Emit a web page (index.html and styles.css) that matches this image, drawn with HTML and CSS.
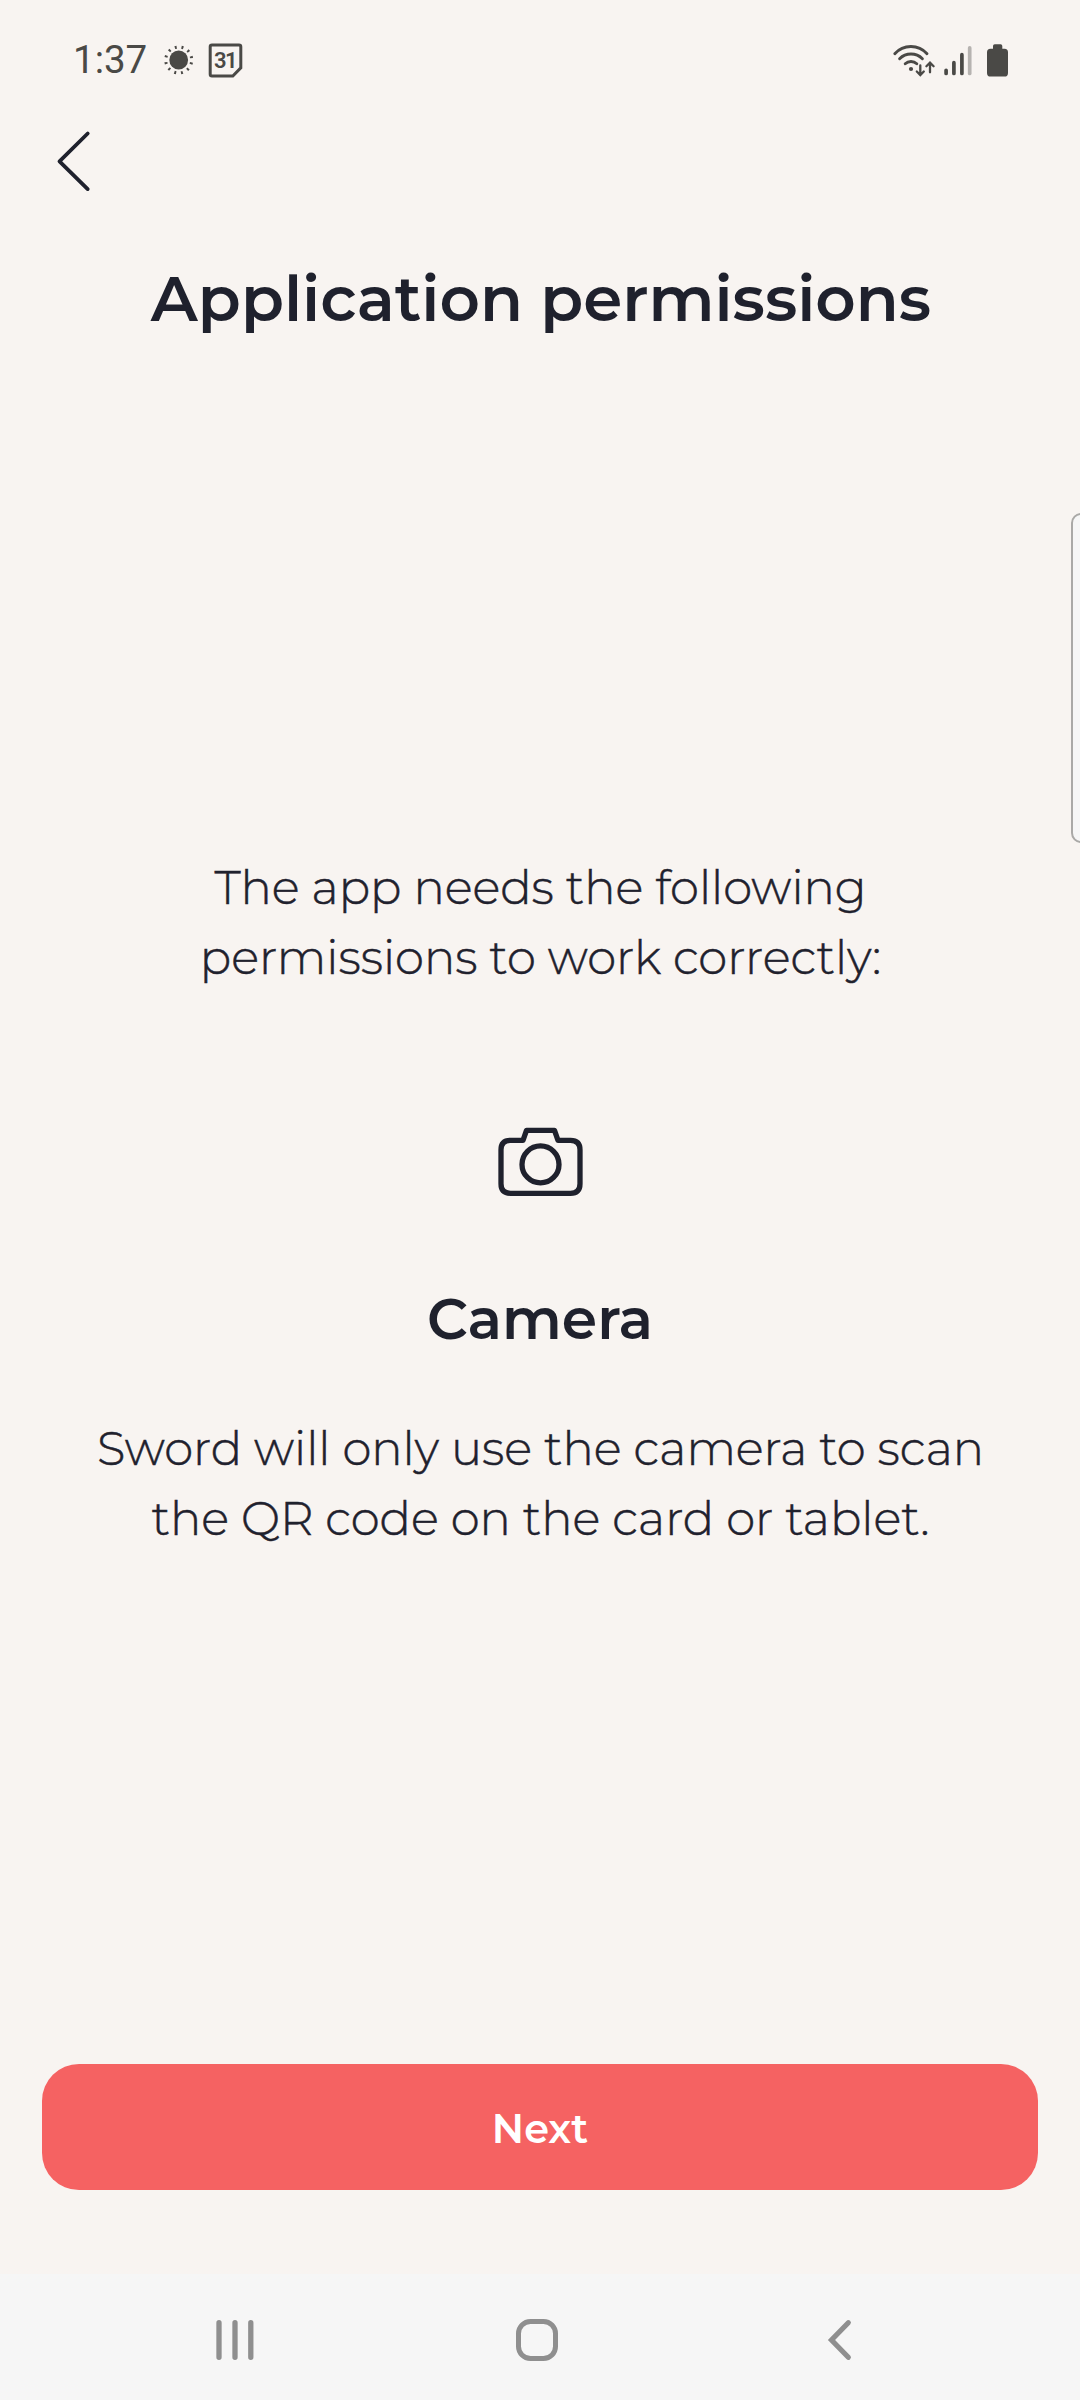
FILE: index.html
```html
<!DOCTYPE html>
<html lang="en">
<head>
<meta charset="utf-8">
<title>Application permissions</title>
<link rel="stylesheet" href="styles.css">
</head>
<body>
<div class="screen">
  <header class="status">
    <span class="time">1:37</span>
    <svg class="sun" width="32" height="40" viewBox="163 40 32 40">
      <circle cx="178.700" cy="60" r="9.400" fill="currentColor"/>
      <circle cx="178.700" cy="60" r="13" fill="none" stroke="currentColor" stroke-width="3" stroke-dasharray="1.900 4.907" stroke-dashoffset="-2.450"/>
    </svg>
    <svg class="calendar" width="38" height="40" viewBox="206 40 38 40">
      <path d="M212 45H239Q240.800 45 240.800 46.800V67.800L232.800 76.100H212Q210.200 76.100 210.200 74.300V46.800Q210.200 45 212 45Z" fill="none" stroke="currentColor" stroke-width="3"/>
      <text x="225" y="67.600" text-anchor="middle" class="day">31</text>
    </svg>
    <svg class="signals" width="120" height="40" viewBox="890 40 120 40" fill="none" stroke="currentColor" stroke-linecap="round">
      <g stroke-width="2.900">
        <path d="M894.800 53.700A21.500 21.500 0 0 1 927 53.700"/>
        <path d="M899.600 58.700A16.200 16.200 0 0 1 922.400 58.700"/>
        <path d="M905.200 63.800A8.500 8.500 0 0 1 916.800 63.800"/>
      </g>
      <circle cx="911" cy="69" r="2.100" fill="currentColor" stroke="none"/>
      <path d="M920.300 65.500V75M916.800 71.500L920.300 75L923.800 71.500M930 72.300V62.700M926.400 66.200L930 62.700L933.600 66.200" stroke-width="2.300"/>
      <g stroke-width="3.700">
        <path d="M946.100 70.300V73.400M953.900 62.700V73.400M961.900 54.700V73.400"/>
        <path class="faint" d="M969.700 47.900V73.400"/>
      </g>
      <path d="M994.800 44.200H1000.600Q1002.300 44.200 1002.300 46V48.700H1004.500Q1008 48.700 1008 52.200V72.900Q1008 76.500 1004.500 76.500H990.500Q987 76.500 987 72.900V52.200Q987 48.700 990.500 48.700H993V46Q993 44.200 994.800 44.200Z" fill="currentColor" stroke="none"/>
    </svg>
  </header>

  <nav class="toolbar">
    <svg class="back" width="36" height="62" viewBox="55 130 36 62">
      <path d="M87.700 133.500L59.500 161.300L87.700 189.100" fill="none" stroke="currentColor" stroke-width="3.800" stroke-linecap="round" stroke-linejoin="round"/>
    </svg>
  </nav>

  <h1 class="title">Application permissions</h1>

  <main class="content">
    <p class="copy">The app needs the following<br>permissions to work correctly:</p>
    <svg class="camera" width="88" height="72" viewBox="496 1126 88 72" fill="none" stroke="currentColor" stroke-width="5.300">
      <path d="M510.500 1140.300H523L526.500 1130.300H554.500L558 1140.300H570.500Q580 1140.300 580 1149.800V1183.800Q580 1193.300 570.500 1193.300H510.500Q501 1193.300 501 1183.800V1149.800Q501 1140.300 510.500 1140.300Z" stroke-linejoin="round"/>
      <circle cx="540.500" cy="1164.400" r="18.500"/>
    </svg>
    <h2 class="subtitle">Camera</h2>
    <p class="copy">Sword will only use the camera to scan<br>the QR code on the card or tablet.</p>
  </main>

  <button class="next" type="button">Next</button>

  <footer class="system">
    <svg width="40" height="44" viewBox="215 2318 40 44"><path d="M219 2322.700V2357.300M235 2322.700V2357.300M250.800 2322.700V2357.300" stroke="currentColor" stroke-width="5.300" stroke-linecap="round"/></svg>
    <svg width="50" height="44" viewBox="512 2318 50 44"><rect x="518.500" y="2321.500" width="37" height="37" rx="12" fill="none" stroke="currentColor" stroke-width="5"/></svg>
    <svg width="40" height="44" viewBox="819 2318 40 44"><path d="M848.300 2322.700L831.500 2340L848.300 2357.300" fill="none" stroke="currentColor" stroke-width="5.200" stroke-linecap="round"/></svg>
  </footer>
  <div class="edge-handle"></div>
</div>
</body>
</html>
```
FILE: styles.css
```css
* { box-sizing: border-box; }

body {
  margin: 0;
  background: #f8f4f1;
}

.screen {
  position: relative;
  display: flex;
  flex-direction: column;
  width: 1080px;
  height: 2400px;
  overflow: hidden;
  background: #f8f4f1;
  color: #1f212d;
  font-family: Montserrat, Inter, sans-serif;
}

svg { display: block; flex: none; }

.status {
  display: flex;
  align-items: center;
  height: 120px;
  padding: 0 70px 0 73px;
  color: #4a4946;
}

.time {
  width: 90px;
  font: 400 38.500px/40px Roboto, sans-serif;
}

.calendar { margin-left: 11px; }

.day {
  font: 600 22px Roboto, sans-serif;
  letter-spacing: -1.500px;
  fill: currentColor;
}

.signals { margin-left: auto; }

.faint { stroke: #b6b3b0; }

.toolbar {
  height: 138.500px;
  padding: 10px 55px;
}

.title {
  margin: 0;
  padding-left: 2px;
  font-size: 62.750px;
  font-weight: 600;
  line-height: 80px;
  text-align: center;
}

.content {
  display: flex;
  flex-direction: column;
  align-items: center;
  padding-top: 514px;
}

.copy {
  margin: 0;
  padding-left: 1px;
  font-size: 46.500px;
  font-weight: 300;
  line-height: 70px;
  text-align: center;
  -webkit-text-stroke: 0.500px currentColor;
}

.camera { margin: 133.500px 0 86px; }

.subtitle {
  margin: 0 0 60px;
  font-size: 56.800px;
  font-weight: 600;
  line-height: 70px;
}

.next {
  height: 126px;
  margin: auto 42px 84px;
  padding: 3px 0 0;
  border: 0;
  border-radius: 37px;
  background: #f56262;
  color: #fff;
  font: 600 39.900px/50px Montserrat, Inter, sans-serif;
}

.system {
  display: grid;
  grid-template-columns: 40px 50px 40px;
  column-gap: 257px;
  height: 126px;
  padding: 44px 0 0 215px;
  background: #f6f6f6;
  color: #8f8f8f;
}

.edge-handle {
  position: absolute;
  top: 513px;
  right: -12px;
  width: 21px;
  height: 330px;
  border: 2px solid #aaa9a7;
  border-radius: 10px;
  background: #f6f6f6;
}
```
